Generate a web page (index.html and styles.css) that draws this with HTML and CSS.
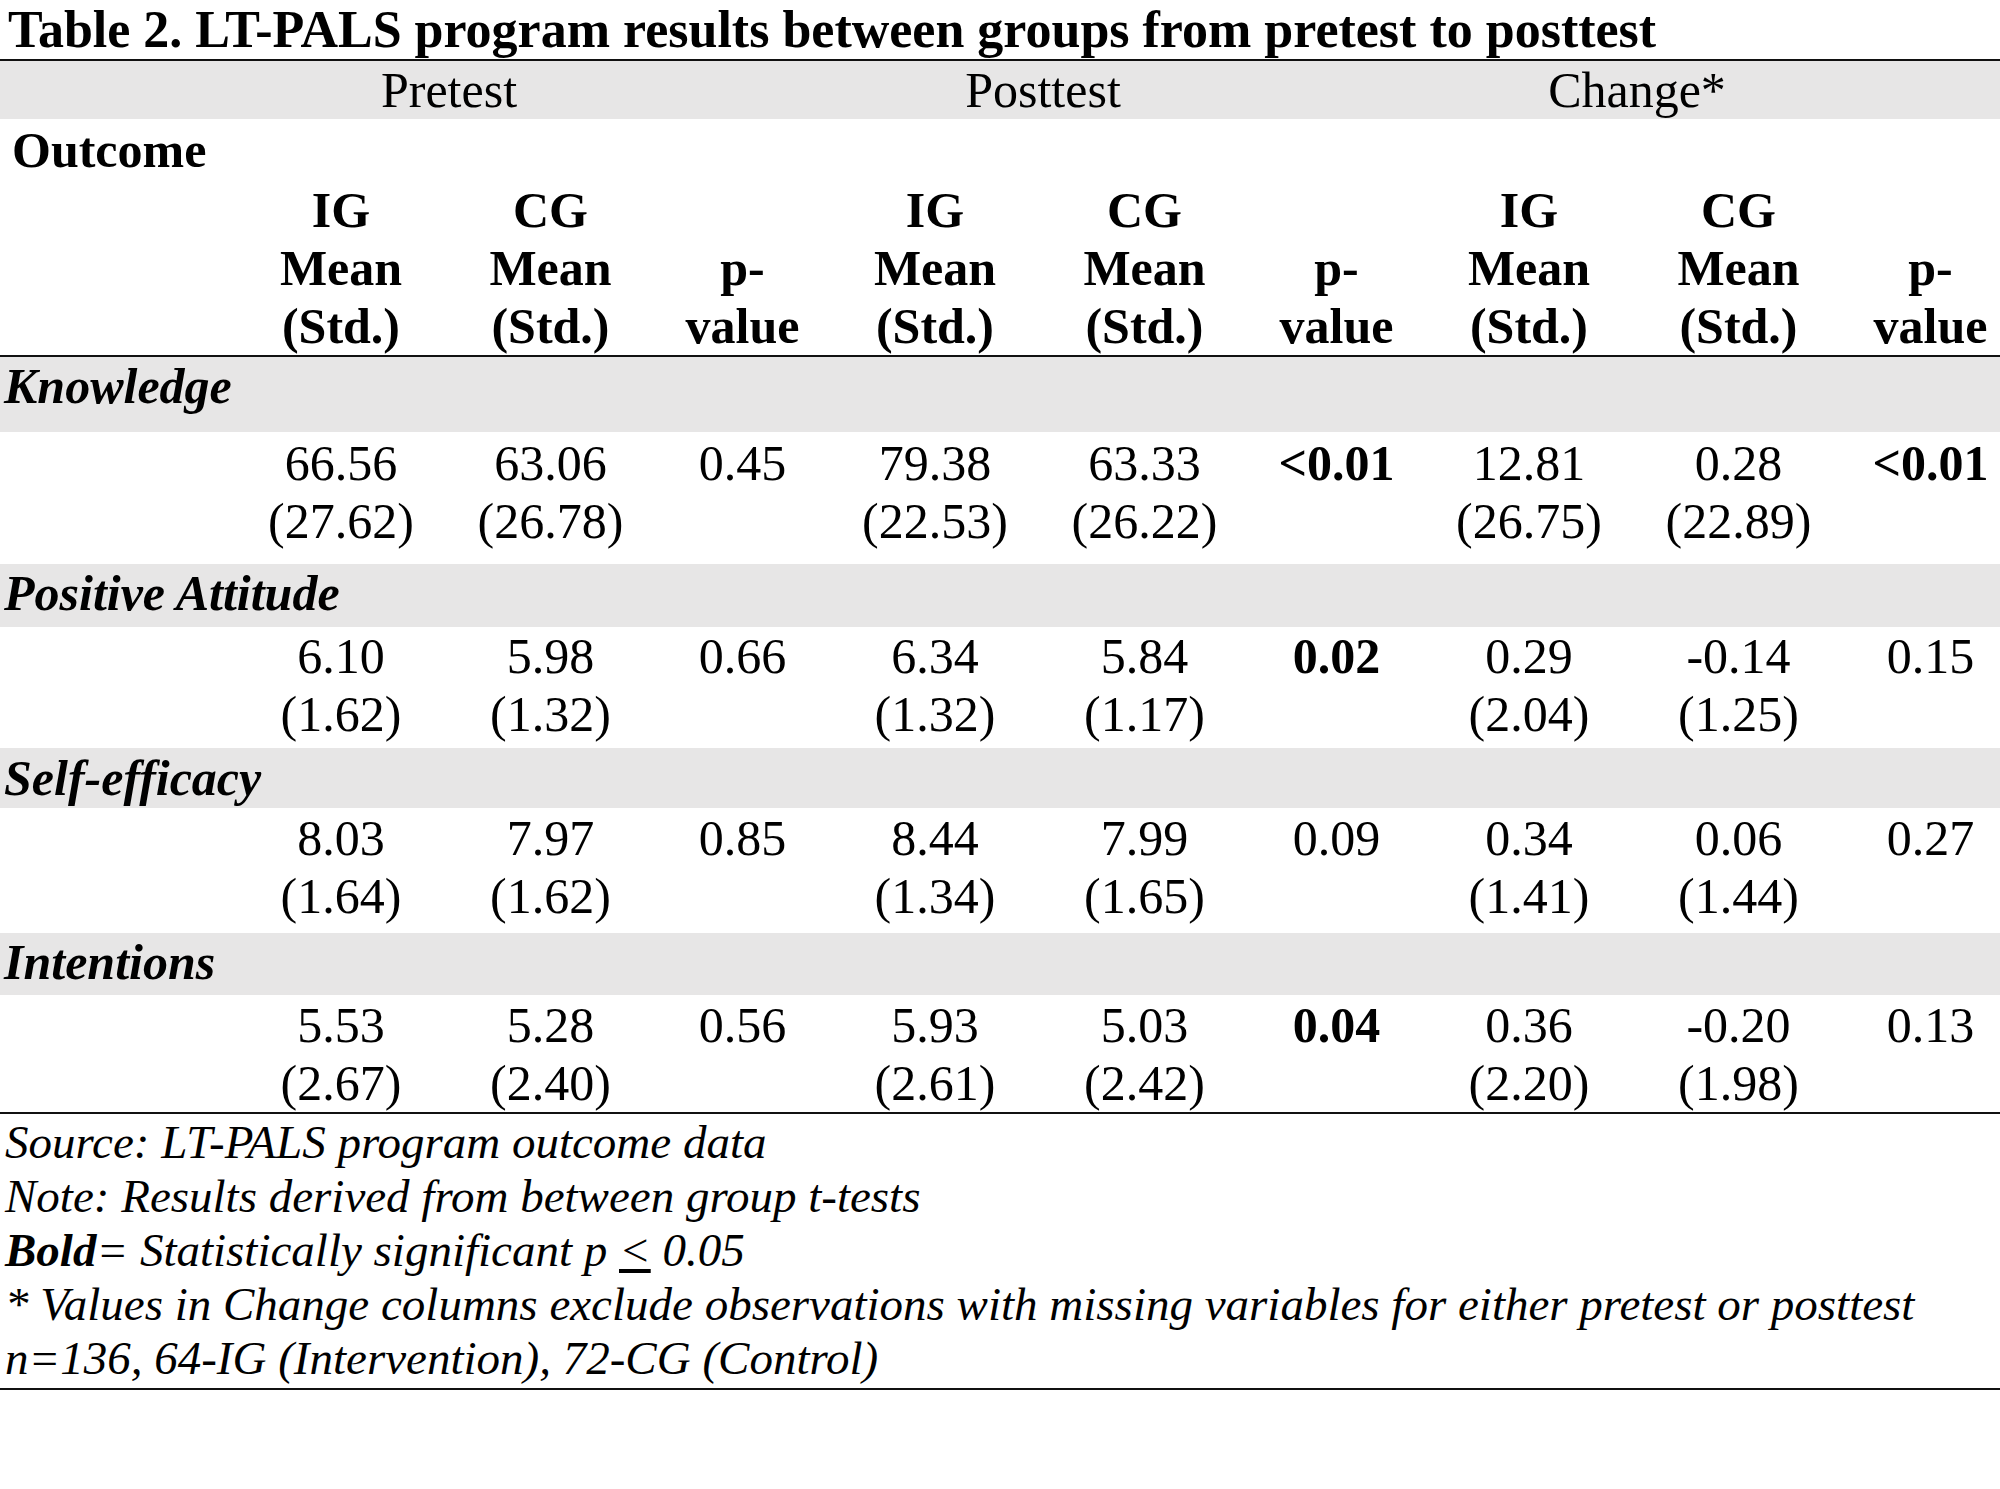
FILE: index.html
```html
<!DOCTYPE html>
<html lang="en">
<head>
<meta charset="utf-8">
<title>Table 2. LT-PALS program results</title>
<link rel="stylesheet" href="styles.css">
</head>
<body>
<div class="page">
  <h1 class="title">Table 2. LT-PALS program results between groups from pretest to posttest</h1>
  <div class="tbl">
    <div class="groups">
      <div></div>
      <div>Pretest</div>
      <div>Posttest</div>
      <div>Change*</div>
    </div>
    <div class="outcome-row">Outcome</div>
    <div class="row head">
      <div></div>
      <div>IG<br>Mean<br>(Std.)</div>
      <div>CG<br>Mean<br>(Std.)</div>
      <div class="pv">p-<br>value</div>
      <div>IG<br>Mean<br>(Std.)</div>
      <div>CG<br>Mean<br>(Std.)</div>
      <div class="pv">p-<br>value</div>
      <div>IG<br>Mean<br>(Std.)</div>
      <div>CG<br>Mean<br>(Std.)</div>
      <div class="pv">p-<br>value</div>
    </div>

    <div class="band b-know">Knowledge</div>
    <div class="row data d-know">
      <div></div>
      <div>66.56<br>(27.62)</div>
      <div>63.06<br>(26.78)</div>
      <div>0.45</div>
      <div>79.38<br>(22.53)</div>
      <div>63.33<br>(26.22)</div>
      <div class="sig">&lt;0.01</div>
      <div>12.81<br>(26.75)</div>
      <div>0.28<br>(22.89)</div>
      <div class="sig">&lt;0.01</div>
    </div>

    <div class="band b-pos">Positive Attitude</div>
    <div class="row data d-pos">
      <div></div>
      <div>6.10<br>(1.62)</div>
      <div>5.98<br>(1.32)</div>
      <div>0.66</div>
      <div>6.34<br>(1.32)</div>
      <div>5.84<br>(1.17)</div>
      <div class="sig">0.02</div>
      <div>0.29<br>(2.04)</div>
      <div>-0.14<br>(1.25)</div>
      <div>0.15</div>
    </div>

    <div class="band b-self">Self-efficacy</div>
    <div class="row data d-self">
      <div></div>
      <div>8.03<br>(1.64)</div>
      <div>7.97<br>(1.62)</div>
      <div>0.85</div>
      <div>8.44<br>(1.34)</div>
      <div>7.99<br>(1.65)</div>
      <div>0.09</div>
      <div>0.34<br>(1.41)</div>
      <div>0.06<br>(1.44)</div>
      <div>0.27</div>
    </div>

    <div class="band b-int">Intentions</div>
    <div class="row data d-int">
      <div></div>
      <div>5.53<br>(2.67)</div>
      <div>5.28<br>(2.40)</div>
      <div>0.56</div>
      <div>5.93<br>(2.61)</div>
      <div>5.03<br>(2.42)</div>
      <div class="sig">0.04</div>
      <div>0.36<br>(2.20)</div>
      <div>-0.20<br>(1.98)</div>
      <div>0.13</div>
    </div>
  </div>

  <div class="notes">
    <p>Source: LT-PALS program outcome data</p>
    <p>Note: Results derived from between group t-tests</p>
    <p><b>Bold</b>= Statistically significant p <span class="le">&lt;</span> 0.05</p>
    <p>* Values in Change columns exclude observations with missing variables for either pretest or posttest</p>
    <p>n=136, 64-IG (Intervention), 72-CG (Control)</p>
  </div>
</div>
</body>
</html>
```

FILE: styles.css
```css
html, body {
  margin: 0;
  padding: 0;
  background: #ffffff;
  overflow: hidden;
}

body {
  font-family: "Liberation Serif", "Times New Roman", serif;
  color: #000000;
}

.page {
  width: 2018px;
}

.title {
  margin: 0;
  padding: 1px 0 0 8px;
  font-size: 52px;
  line-height: 58px;
  font-weight: bold;
  border-bottom: 2px solid #111111;
}

.tbl {
  font-size: 50px;
  line-height: 58px;
  border-bottom: 2px solid #111111;
}

.groups {
  display: grid;
  grid-template-columns: 152px repeat(3, 594px);
  height: 58px;
  background: #e7e6e6;
  text-align: center;
}

.outcome-row {
  padding: 2px 0 2px 12px;
  font-weight: bold;
}

.row {
  display: grid;
  grid-template-columns: 236px repeat(3, 210px 209px 175px);
  text-align: center;
  white-space: nowrap;
}

.head {
  font-weight: bold;
  border-bottom: 2px solid #111111;
}

.head .pv {
  align-self: end;
}

.band {
  background: #e7e6e6;
  font-style: italic;
  font-weight: bold;
  padding-left: 4px;
}

.sig {
  font-weight: bold;
}

.b-know { padding-bottom: 17px; }
.d-know { padding: 2px 0 14px; }
.b-pos { padding-bottom: 5px; }
.d-pos { padding-bottom: 5px; }
.b-self { padding-top: 1px; padding-bottom: 1px; }
.d-self { padding: 1px 0 8px; }
.b-int { padding-bottom: 4px; }
.d-int { padding-top: 1px; }

.notes {
  font-style: italic;
  font-size: 47px;
  line-height: 54px;
  padding: 1px 0 3px 5px;
  border-bottom: 2px solid #111111;
}

.notes p {
  margin: 0;
  white-space: nowrap;
}

.notes b {
  font-weight: bold;
}

.le {
  text-decoration: underline;
}
```
